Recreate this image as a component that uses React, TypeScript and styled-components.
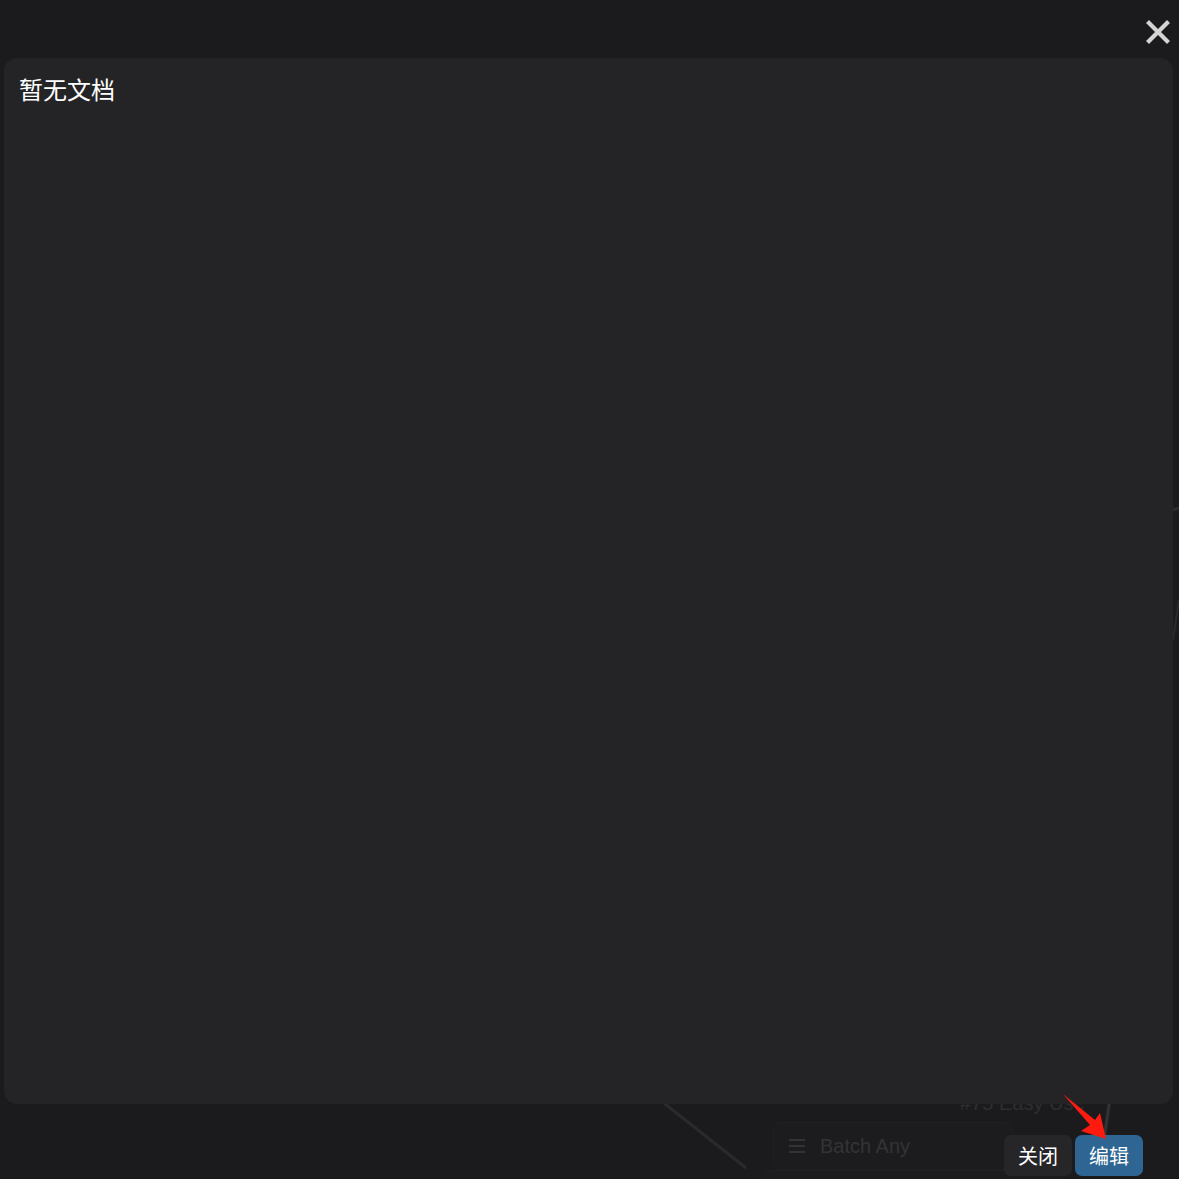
import React from "react";
import styled, { createGlobalStyle } from "styled-components";

const Global = createGlobalStyle`
  html, body { margin: 0; padding: 0; background: #1b1b1d; }
  body { font-family: "Noto Sans CJK SC", "Noto Sans", sans-serif; }
`;

const Stage = styled.div`
  position: relative;
  width: 1179px;
  height: 1179px;
  overflow: hidden;
  background: #1b1b1d;
  display: flex;
  flex-direction: column;
`;

const Canvas = styled.div`
  position: absolute;
  inset: 0;
  pointer-events: none;
`;

const GraphNode = styled.div<{ $x: number; $y: number; $w: number; $h: number }>`
  position: absolute;
  left: ${(p) => p.$x}px;
  top: ${(p) => p.$y}px;
  width: ${(p) => p.$w}px;
  height: ${(p) => p.$h}px;
  border-radius: 8px;
  background: #1c1c1e;
  border: 1px solid #202022;
  display: flex;
  align-items: center;
  gap: 14px;
  padding-left: 14px;
  box-sizing: border-box;
  color: #333335;
  font-family: "Liberation Sans", Arial, sans-serif;
  font-size: 20px;
`;

const FaintText = styled.div<{ $x: number; $y: number }>`
  position: absolute;
  left: ${(p) => p.$x}px;
  top: ${(p) => p.$y}px;
  color: #2e2e30;
  font-family: "Liberation Sans", Arial, sans-serif;
  font-size: 20px;
`;

const TopBar = styled.div`
  position: relative;
  height: 58px;
  display: flex;
  justify-content: flex-end;
  align-items: center;
  padding-right: 8px;
`;

const CloseBtn = styled.button`
  background: none;
  border: none;
  padding: 0;
  width: 26px;
  height: 26px;
  margin-top: 6px;
  display: flex;
  align-items: center;
  justify-content: center;
  cursor: pointer;
`;

const Panel = styled.div`
  position: relative;
  margin: 0 6px 0 4px;
  height: 1046px;
  background: #242426;
  border-radius: 13px;
  padding: 15px 15px;
  box-sizing: border-box;
`;

const Title = styled.div`
  color: #ffffff;
  font-size: 24px;
  line-height: 32px;
  font-weight: 400;
`;

const Footer = styled.div`
  position: relative;
  display: flex;
  justify-content: flex-end;
  gap: 3px;
  padding: 31px 36px 0 0;
`;

const Btn = styled.button<{ $primary?: boolean }>`
  height: 41px;
  width: 68px;
  padding: 0;
  border: none;
  border-radius: 7px;
  background: ${(p) => (p.$primary ? "#2e6592" : "#262628")};
  color: #ffffff;
  font-family: "Noto Sans CJK SC", sans-serif;
  font-size: 20px;
  line-height: 41px;
  cursor: pointer;
`;

const Arrow = styled.svg`
  position: absolute;
  left: 1060px;
  top: 1090px;
  overflow: visible;
`;

export default function App() {
  return (
    <Stage>
      <Global />
      <Canvas>
        <svg width="1179" height="1179" style={{ position: "absolute", left: 0, top: 0 }}>
          <line x1="660" y1="1100" x2="746" y2="1168" stroke="#2a2a2c" strokeWidth="3" />
          <line x1="1110" y1="1098" x2="1104" y2="1140" stroke="#333335" strokeWidth="3" />
          <line x1="1173" y1="510" x2="1179" y2="508" stroke="#2c2c2e" strokeWidth="3" />
          <line x1="1173" y1="640" x2="1179" y2="600" stroke="#2a2a2c" strokeWidth="2" />
        </svg>
        <FaintText $x={960} $y={1092}>#75 Easy Use</FaintText>
        <GraphNode $x={773} $y={1122} $w={240} $h={48}>
          <svg width="18" height="16" viewBox="0 0 18 16">
            <path d="M1 2h16M1 8h16M1 14h16" stroke="#333335" strokeWidth="2" />
          </svg>
          Batch Any
        </GraphNode>
        <GraphNode $x={762} $y={1170} $w={300} $h={30} />
      </Canvas>
      <TopBar>
        <CloseBtn aria-label="close">
          <svg width="24" height="24" viewBox="0 0 24 24">
            <path d="M3 3L21 21M21 3L3 21" stroke="#d4d4d4" strokeWidth="4.2" strokeLinecap="square" />
          </svg>
        </CloseBtn>
      </TopBar>
      <Panel>
        <Title>暂无文档</Title>
      </Panel>
      <Footer>
        <Btn>关闭</Btn>
        <Btn $primary>编辑</Btn>
      </Footer>
      <Arrow width="60" height="60" viewBox="0 0 60 60">
        <polygon points="3,4 35,30 40,23 46,49 21,41 30,35" fill="#ff1a0f" />
      </Arrow>
    </Stage>
  );
}
